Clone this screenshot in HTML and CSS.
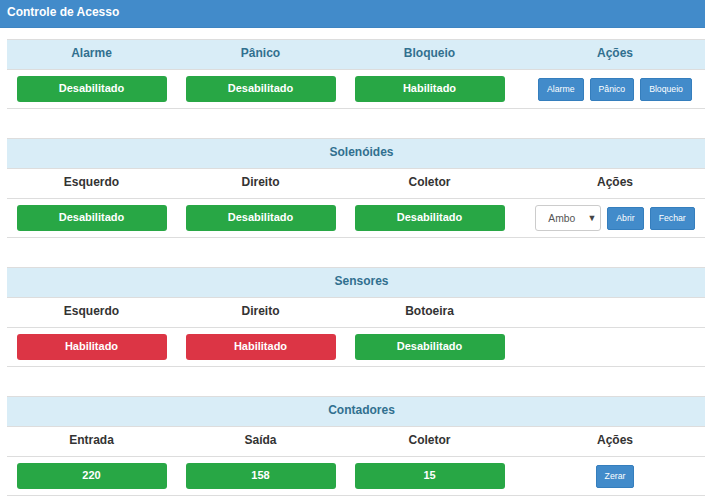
FILE: index.html
```html
<!DOCTYPE html>
<html lang="pt-BR">
<head>
<meta charset="utf-8">
<title>Controle de Acesso</title>
<link rel="stylesheet" href="styles.css">
</head>
<body>
<div class="topbar">Controle de Acesso</div>
<div class="content">
  <table class="panel">
    <colgroup><col class="c1"><col class="c2"><col class="c3"><col class="c4"></colgroup>
    <tr class="info"><th>Alarme</th><th>Pânico</th><th>Bloqueio</th><th>Ações</th></tr>
    <tr class="body">
      <td><span class="state ok">Desabilitado</span></td>
      <td><span class="state ok">Desabilitado</span></td>
      <td><span class="state ok">Habilitado</span></td>
      <td><div class="actions"><button class="btn">Alarme</button><button class="btn">Pânico</button><button class="btn">Bloqueio</button></div></td>
    </tr>
  </table>

  <table class="panel">
    <colgroup><col class="c1"><col class="c2"><col class="c3"><col class="c4"></colgroup>
    <tr class="info"><th colspan="4">Solenóides</th></tr>
    <tr class="sub"><th>Esquerdo</th><th>Direito</th><th>Coletor</th><th>Ações</th></tr>
    <tr class="body">
      <td><span class="state ok">Desabilitado</span></td>
      <td><span class="state ok">Desabilitado</span></td>
      <td><span class="state ok">Desabilitado</span></td>
      <td><div class="actions"><div class="select"><span>Ambo</span><span class="arrow">▼</span></div><button class="btn">Abrir</button><button class="btn">Fechar</button></div></td>
    </tr>
  </table>

  <table class="panel">
    <colgroup><col class="c1"><col class="c2"><col class="c3"><col class="c4"></colgroup>
    <tr class="info"><th colspan="4">Sensores</th></tr>
    <tr class="sub"><th>Esquerdo</th><th>Direito</th><th>Botoeira</th><th></th></tr>
    <tr class="body">
      <td><span class="state bad">Habilitado</span></td>
      <td><span class="state bad">Habilitado</span></td>
      <td><span class="state ok">Desabilitado</span></td>
      <td></td>
    </tr>
  </table>

  <table class="panel">
    <colgroup><col class="c1"><col class="c2"><col class="c3"><col class="c4"></colgroup>
    <tr class="info"><th colspan="4">Contadores</th></tr>
    <tr class="sub"><th>Entrada</th><th>Saída</th><th>Coletor</th><th>Ações</th></tr>
    <tr class="body">
      <td><span class="state ok">220</span></td>
      <td><span class="state ok">158</span></td>
      <td><span class="state ok">15</span></td>
      <td><div class="actions"><button class="btn">Zerar</button></div></td>
    </tr>
  </table>
</div>
</body>
</html>
```
FILE: styles.css
```css
html, body {
  margin: 0;
  padding: 0;
  overflow: hidden;
  background: #fff;
  font-family: "Liberation Sans", Arial, sans-serif;
  color: #333;
}

.topbar {
  height: 27px;
  line-height: 24px;
  background: #428bca;
  color: #fff;
  font-size: 12px;
  font-weight: bold;
  padding-left: 7px;
  border-bottom: 1px solid #3f85c2;
}

.content {
  padding: 11px 0 0 7px;
  overflow: hidden;
}

.panel {
  border-collapse: collapse;
  table-layout: fixed;
  width: 709px;
  margin-bottom: 29px;
  border-bottom: 1px solid #ddd;
}

.c1, .c2, .c3 { width: 169px; }
.c4 { width: 202px; }

.panel tr { border-top: 1px solid #ddd; }

.panel th {
  font-size: 12px;
  font-weight: bold;
  line-height: 17px;
  padding: 5px 0 7px;
  text-align: center;
}

.info { background: #d9edf7; }
.info th { color: #31708f; }
.sub th { color: #333; }

.body td {
  padding: 6px 0;
  height: 26px;
  text-align: center;
  vertical-align: middle;
}

.state {
  display: block;
  width: 150px;
  height: 26px;
  margin: 0 auto;
  border-radius: 3px;
  color: #fff;
  font-size: 11px;
  font-weight: bold;
  line-height: 25px;
}

.ok { background: #28a745; }
.bad { background: #dc3545; }

.actions {
  display: flex;
  justify-content: center;
  align-items: center;
  gap: 6px;
}

.btn {
  height: 23px;
  padding: 0 8px;
  border: 1px solid #357ebd;
  border-radius: 2px;
  background: #428bca;
  color: #fff;
  font-family: "Liberation Sans", Arial, sans-serif;
  font-size: 8.7px;
  line-height: 21px;
}

.select {
  box-sizing: border-box;
  width: 66px;
  height: 26px;
  border: 1px solid #ccc;
  border-radius: 3px;
  background: #fff;
  display: flex;
  align-items: center;
  justify-content: space-between;
  padding: 0 4px 0 12px;
  font-size: 10.3px;
  color: #555;
}

.select .arrow {
  font-size: 9px;
  color: #444;
}
```
